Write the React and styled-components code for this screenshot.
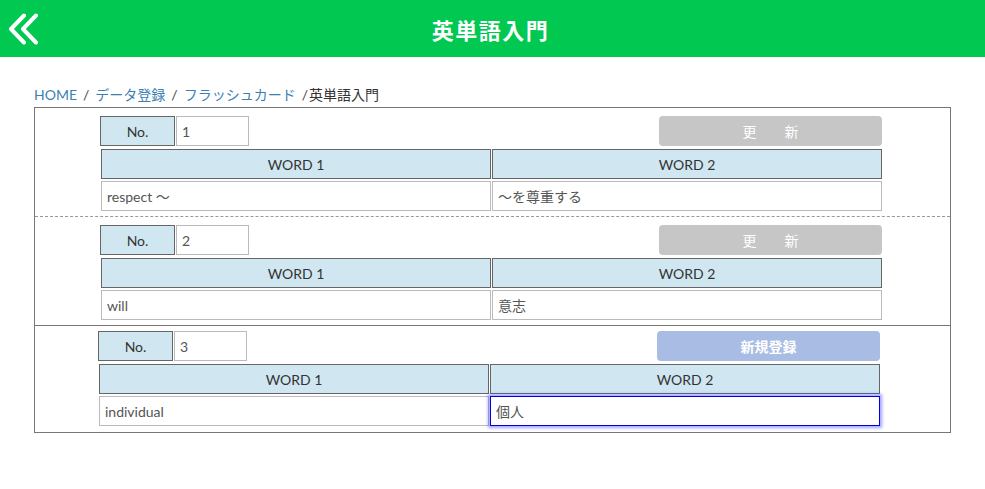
import React from "react"
import styled, { createGlobalStyle } from "styled-components"

const GlobalStyle = createGlobalStyle`
	body {
		margin: 0;
		font-family: Lato, "Noto Sans CJK JP", sans-serif;
		color: #333;
		background: #fff;
	}
`

const cards = [
	{ no: "1", word1: "respect ～", word2: "～を尊重する", mode: "update" },
	{ no: "2", word1: "will", word2: "意志", mode: "update" },
	{ no: "3", word1: "individual", word2: "個人", mode: "new" },
]

const BackIcon = () => (
	<svg width="32" height="32" viewBox="0 0 32 32" fill="none">
		<path
			d="M16 2.5 L3 16 L16 29.5 M28 2.5 L15 16 L28 29.5"
			stroke="#fff"
			strokeWidth="4"
			strokeLinecap="round"
			strokeLinejoin="round"
		/>
	</svg>
)

const App = () => {
	return (
		<>
			<GlobalStyle />
			<Header>
				<BackButton>
					<BackIcon />
				</BackButton>
				<Title>英単語入門</Title>
			</Header>
			<Main>
				<Breadcrumb>
					<Crumb>HOME</Crumb>
					<Slash>/</Slash>
					<Crumb>データ登録</Crumb>
					<Slash>/</Slash>
					<Crumb>フラッシュカード</Crumb>
					<Slash>/</Slash>
					<Current>英単語入門</Current>
				</Breadcrumb>
				<Board>
					{cards.map((card, i) => (
						<Block
							key={card.no}
							$divider={i === 0 ? "dashed" : i === 1 ? "solid" : "none"}
							$pad={i === 0 ? "8px 0 5px" : i === 1 ? "8px 0 5px" : "5px 0 6px"}>
							<Inner $shift={card.mode === "new"}>
								<TopRow>
									<NoLabel>No.</NoLabel>
									<NoInput defaultValue={card.no} />
									<ActionButton $mode={card.mode}>
										{card.mode === "new" ? "新規登録" : "更\u3000\u3000新"}
									</ActionButton>
								</TopRow>
								<WordGrid>
									<WordHead>WORD 1</WordHead>
									<WordHead>WORD 2</WordHead>
								</WordGrid>
								<WordGrid>
									<WordInput defaultValue={card.word1} />
									<WordInput
										defaultValue={card.word2}
										$focused={card.mode === "new"}
									/>
								</WordGrid>
							</Inner>
						</Block>
					))}
				</Board>
			</Main>
		</>
	)
}

const Header = styled.header`
	position: relative;
	height: 57px;
	background-color: #00c851;
	display: flex;
	align-items: center;
	justify-content: center;
`

const BackButton = styled.div`
	position: absolute;
	left: 8px;
	top: 13px;
	display: flex;
`

const Title = styled.h1`
	margin: 0 0 0 -4px;
	color: #fff;
	font-family: "Noto Sans CJK JP", sans-serif;
	font-weight: 700;
	font-size: 22px;
	letter-spacing: 1.5px;
`

const Main = styled.main`
	padding: 28px 34px 0;
`

const Breadcrumb = styled.nav`
	display: flex;
	align-items: center;
	font-size: 14px;
	height: 20px;
	line-height: 20px;
`

const Crumb = styled.a`
	color: #3d7fb3;
	cursor: pointer;
`

const Slash = styled.span`
	color: #444;
	margin: 0 6px;
`

const Current = styled.span`
	color: #333;
	margin-left: -5px;
`

const Board = styled.div`
	margin-top: 2px;
	border: 1px solid #777;
	display: flex;
	flex-direction: column;
`

const Block = styled.section`
	padding: ${(props) => props.$pad};
	border-bottom: ${(props) =>
		props.$divider === "dashed"
			? "1px dashed #999"
			: props.$divider === "solid"
			? "1px solid #777"
			: "none"};
`

const Inner = styled.div`
	width: 781px;
	margin-left: ${(props) => (props.$shift ? "64px" : "66px")};
	display: flex;
	flex-direction: column;
	gap: 3px;

	& > :last-child {
		margin-top: -1px;
	}
`

const TopRow = styled.div`
	display: flex;
	align-items: center;
	gap: 1px;
	margin-left: -1px;
`

const NoLabel = styled.div`
	width: 73px;
	height: 28px;
	border: 1px solid #666;
	background-color: #d0e7f2;
	display: flex;
	align-items: center;
	justify-content: center;
	font-size: 14px;
	color: #333;
`

const NoInput = styled.input`
	box-sizing: border-box;
	width: 73px;
	height: 30px;
	border: 1px solid #bbb;
	padding: 0 5px;
	font-family: Lato, "Noto Sans CJK JP", sans-serif;
	font-size: 14px;
	color: #555;
	outline: none;
`

const ActionButton = styled.button`
	margin-left: auto;
	width: 223px;
	height: 30px;
	border: none;
	border-radius: 4px;
	background-color: ${(props) => (props.$mode === "new" ? "#a8bce4" : "#c6c6c6")};
	color: #fff;
	font-family: Lato, "Noto Sans CJK JP", sans-serif;
	font-size: 14px;
	font-weight: ${(props) => (props.$mode === "new" ? 700 : 400)};
`

const WordGrid = styled.div`
	display: grid;
	grid-template-columns: 1fr 1fr;
	gap: 1px;
`

const WordHead = styled.div`
	height: 28px;
	border: 1px solid #666;
	background-color: #d0e7f2;
	display: flex;
	align-items: center;
	justify-content: center;
	font-size: 14px;
	color: #333;
`

const WordInput = styled.input`
	box-sizing: border-box;
	width: 100%;
	height: 30px;
	padding: 0 5px;
	border: ${(props) => (props.$focused ? "1px solid #0000dd" : "1px solid #bbb")};
	box-shadow: ${(props) =>
		props.$focused ? "0 0 3px 2px rgba(70, 70, 255, 0.5)" : "none"};
	font-family: Lato, "Noto Sans CJK JP", sans-serif;
	font-size: 14px;
	color: #555;
	outline: none;
`

export default App
